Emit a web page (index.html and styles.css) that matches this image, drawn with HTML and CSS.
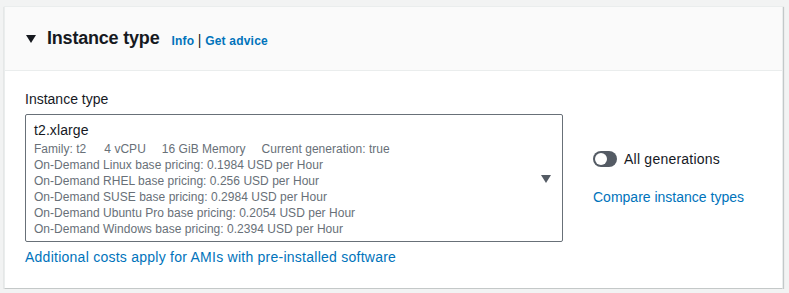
FILE: index.html
```html
<!DOCTYPE html>
<html lang="en">

<head>
  <link rel="stylesheet" href="styles.css">
</head>

<body>
  <div class="panel">
    <div class="panel-header">
      <span class="caret-down"></span>
      <h2>Instance type</h2>
      <span class="header-links">
        <a href="#">Info</a>
        <span class="sep">|</span>
        <a href="#">Get advice</a>
      </span>
    </div>

    <div class="panel-body">
      <div class="field-label">Instance type</div>

      <div class="field-row">
        <div class="select">
          <div class="select-content">
            <div class="select-title">t2.xlarge</div>
            <div class="select-meta">
              <span>Family: t2</span>
              <span>4 vCPU</span>
              <span>16 GiB Memory</span>
              <span>Current generation: true</span>
            </div>
            <div class="select-line">On-Demand Linux base pricing: 0.1984 USD per Hour</div>
            <div class="select-line">On-Demand RHEL base pricing: 0.256 USD per Hour</div>
            <div class="select-line">On-Demand SUSE base pricing: 0.2984 USD per Hour</div>
            <div class="select-line">On-Demand Ubuntu Pro base pricing: 0.2054 USD per Hour</div>
            <div class="select-line">On-Demand Windows base pricing: 0.2394 USD per Hour</div>
          </div>
          <span class="select-arrow"></span>
        </div>

        <div class="side">
          <label class="toggle-row">
            <span class="toggle"><span class="knob"></span></span>
            All generations
          </label>
          <a href="#" class="link">Compare instance types</a>
        </div>
      </div>

      <a href="#" class="link note">Additional costs apply for AMIs with pre-installed software</a>
    </div>
  </div>
</body>

</html>
```

FILE: styles.css
```css
:root {
  --text: #16191f;
  --text-secondary: #687078;
  --link: #0073bb;
  --border: #eaeded;
  --control: #545b64;
}

* {
  box-sizing: border-box;
  margin: 0;
  padding: 0;
}

body {
  background: #f2f3f3;
  font-family: "Liberation Sans", Arial, sans-serif;
  color: var(--text);
  padding: 6px 6px 0 4px;
}

a {
  color: var(--link);
  text-decoration: none;
}

.panel {
  background: #ffffff;
  border: 1px solid var(--border);
  border-bottom-color: #c4c8c8;
  box-shadow: 0 1px 1px 0 rgba(0, 28, 36, 0.3), 1px 1px 1px 0 rgba(0, 28, 36, 0.15);
}

.panel-header {
  display: flex;
  align-items: center;
  height: 64px;
  padding: 0 20px 0 21px;
  background: #fafafa;
  border-bottom: 1px solid var(--border);
}

.caret-down {
  width: 0;
  height: 0;
  border-left: 5px solid transparent;
  border-right: 5px solid transparent;
  border-top: 8px solid var(--text);
  margin-right: 11px;
  margin-top: 1px;
}

h2 {
  font-size: 18px;
  font-weight: 700;
  line-height: 22px;
  letter-spacing: -0.2px;
  margin-right: 12px;
  margin-top: -2px;
}

.header-links {
  font-size: 12px;
  font-weight: 700;
  padding-top: 2px;
  letter-spacing: 0.2px;
}

.header-links .sep {
  color: var(--text);
  font-weight: 400;
  font-size: 14px;
}

.panel-body {
  padding: 17px 20px 20px;
}

.field-label {
  font-size: 14px;
  line-height: 22px;
  margin-bottom: 4px;
}

.field-row {
  display: flex;
  align-items: center;
  gap: 30px;
}

.select {
  width: 538px;
  height: 128px;
  border: 1px solid var(--text-secondary);
  border-radius: 2px;
  padding: 4px 11px 3px 8px;
  display: flex;
  align-items: center;
}

.select-content {
  flex: 1;
  align-self: flex-start;
}

.select-title {
  font-size: 14px;
  line-height: 22px;
  letter-spacing: 0.1px;
}

.select-meta,
.select-line {
  font-size: 12px;
  line-height: 16px;
  letter-spacing: 0.03px;
  color: var(--text-secondary);
}

.select-meta {
  display: flex;
  gap: 16px;
}

.select-meta span:first-child {
  margin-right: 2px;
}

.select-arrow {
  width: 0;
  height: 0;
  border-left: 5px solid transparent;
  border-right: 5px solid transparent;
  border-top: 8px solid var(--control);
}

.side {
  display: flex;
  flex-direction: column;
  gap: 16px;
  font-size: 14px;
  line-height: 22px;
}

.toggle-row {
  display: flex;
  align-items: center;
  gap: 7px;
  letter-spacing: 0.23px;
}

.toggle {
  width: 24px;
  height: 16px;
  border-radius: 8px;
  background: var(--control);
  padding: 2px;
  display: flex;
}

.knob {
  width: 12px;
  height: 12px;
  border-radius: 50%;
  background: #ffffff;
}

.link {
  font-size: 14px;
  line-height: 22px;
}

.note {
  display: block;
  margin-top: 4px;
  letter-spacing: 0.25px;
}
```
